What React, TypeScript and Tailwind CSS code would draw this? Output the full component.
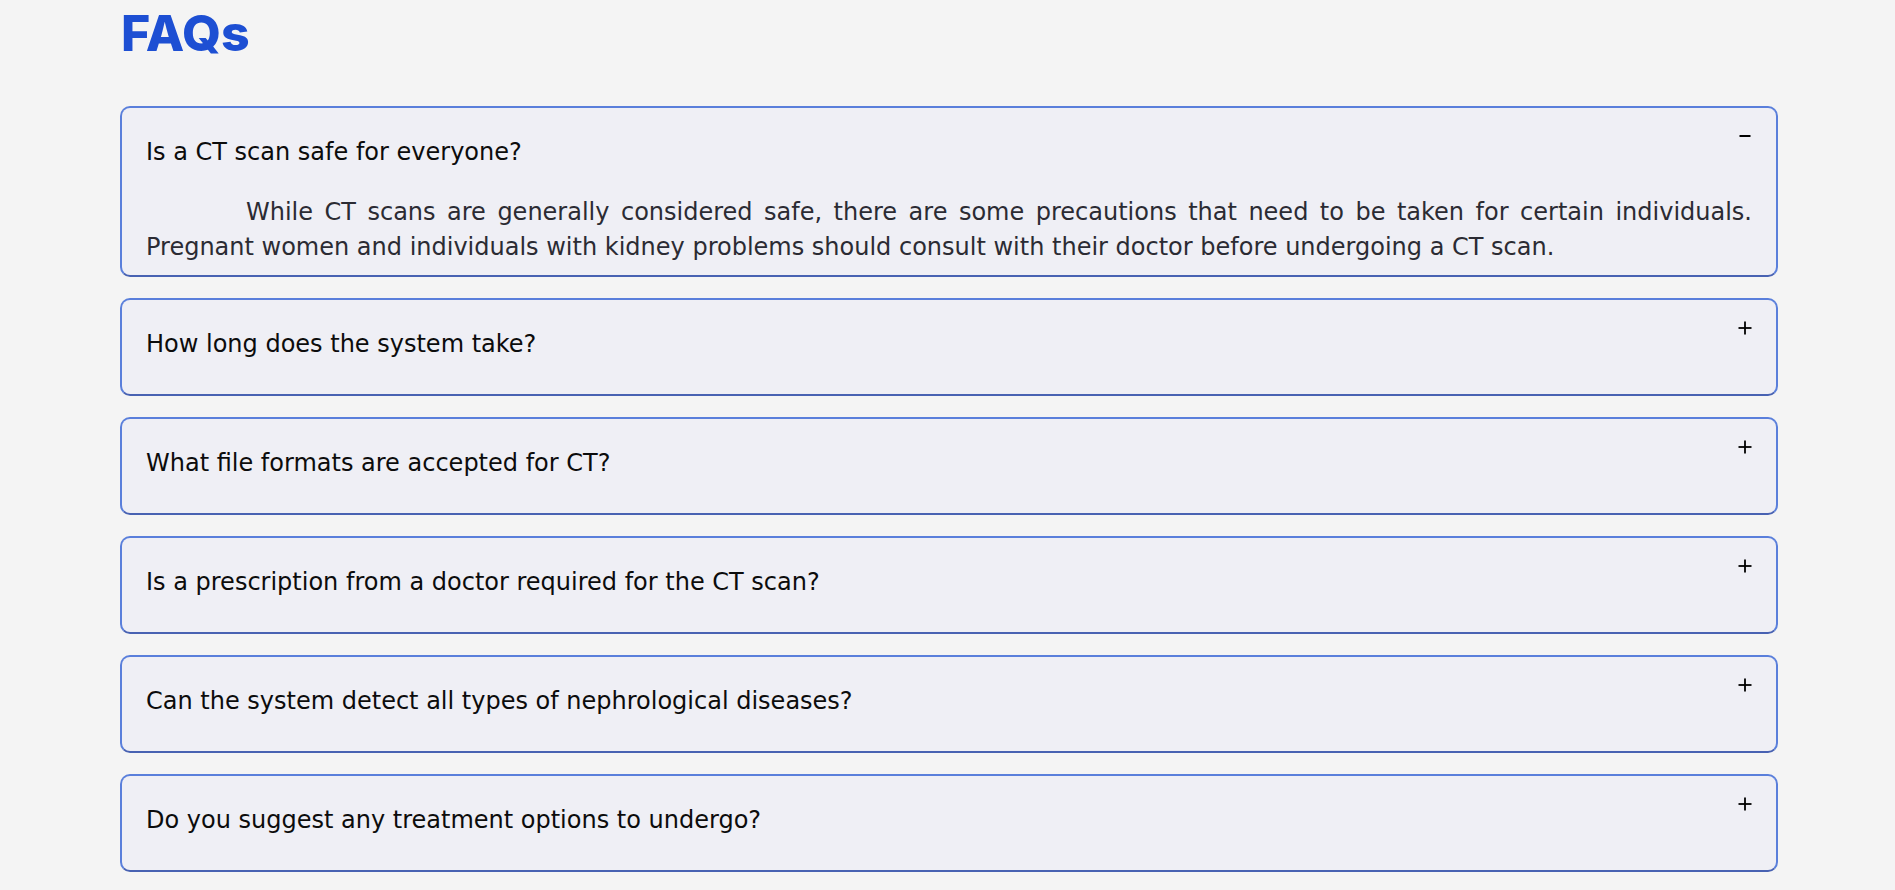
import { useState } from 'react'

const faqs = [
  {
    q: 'Is a CT scan safe for everyone?',
    a: 'While CT scans are generally considered safe, there are some precautions that need to be taken for certain individuals. Pregnant women and individuals with kidney problems should consult with their doctor before undergoing a CT scan.',
  },
  {
    q: 'How long does the system take?',
    a: 'The analysis usually takes only a few seconds once the CT scan has been uploaded.',
  },
  {
    q: 'What file formats are accepted for CT?',
    a: 'Commonly used image formats such as JPG, JPEG and PNG are accepted.',
  },
  {
    q: 'Is a prescription from a doctor required for the CT scan?',
    a: 'Yes, a CT scan should be performed only when it has been prescribed by a doctor.',
  },
  {
    q: 'Can the system detect all types of nephrological diseases?',
    a: 'No, the system is trained to detect a limited set of kidney conditions such as cysts, stones and tumors.',
  },
  {
    q: 'Do you suggest any treatment options to undergo?',
    a: 'No, the results are only meant to assist. Please consult a nephrologist for treatment.',
  },
]

function PlusMinus({ open }: { open: boolean }) {
  return (
    <svg width="14" height="14" viewBox="0 0 14 14" className="text-black">
      {open ? (
        <line x1="1.5" y1="7" x2="12.5" y2="7" stroke="currentColor" strokeWidth="2" />
      ) : (
        <>
          <line x1="0.5" y1="7" x2="13.5" y2="7" stroke="currentColor" strokeWidth="1.8" />
          <line x1="7" y1="0.5" x2="7" y2="13.5" stroke="currentColor" strokeWidth="1.8" />
        </>
      )}
    </svg>
  )
}

export default function App() {
  const [openIndex, setOpenIndex] = useState<number | null>(0)

  return (
    <div className="min-h-screen bg-[#f4f4f4]" style={{ fontFamily: '"DejaVu Sans", sans-serif' }}>
      <div className="ml-[120px] w-[1658px] pt-2 pb-4">
        <h1 className="font-['Inter',sans-serif] text-[50px] leading-[50px] font-extrabold text-[#1d4fd3] pl-[1px]">
          FAQs
        </h1>

        <div className="mt-[48px] flex flex-col gap-[21px]">
          {faqs.map((item, i) => {
            const open = openIndex === i
            return (
              <div
                key={i}
                className="rounded-[10px] border-2 border-[#5a7fdb] border-b-[#4862b2] bg-[#efeff5] px-6 cursor-pointer"
                onClick={() => setOpenIndex(open ? null : i)}
              >
                <div className={open ? 'flex items-start justify-between pt-[28px]' : 'flex items-start justify-between pt-[28px] pb-[34px]'}>
                  <p className="text-[24px] leading-[32px] text-[#0c0c0c]">{item.q}</p>
                  <div className="-mt-[7px]">
                    <PlusMinus open={open} />
                  </div>
                </div>
                {open && (
                  <p className="pt-[27px] pb-[10px] text-[24px] leading-[35px] text-[#2b2b33] text-justify indent-[100px]">
                    {item.a}
                  </p>
                )}
              </div>
            )
          })}
        </div>
      </div>
    </div>
  )
}
